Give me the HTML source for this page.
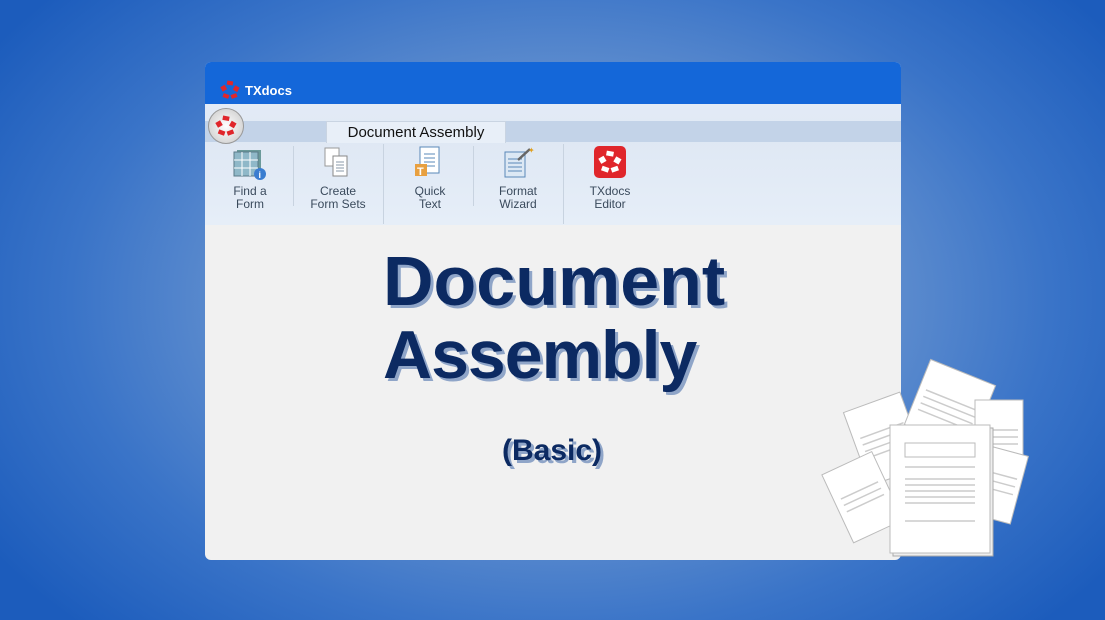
<!DOCTYPE html>
<html><head><style>
*{margin:0;padding:0;box-sizing:border-box}
body{width:1105px;height:620px;overflow:hidden;position:relative;font-family:"Liberation Sans",sans-serif;
background:radial-gradient(ellipse 680px 460px at 560px 300px,#8aabd8 0%,#6a95d0 40%,#3a74c8 72%,#1c5cbc 100%)}
.win{position:absolute;left:205px;top:62px;width:696px;height:498px;background:#f1f1f1;border-radius:6px;overflow:hidden}
.title{position:absolute;left:0;top:0;width:100%;height:42px;background:#1467d9}
.title span{position:absolute;left:40px;top:21px;color:#fff;font-weight:bold;font-size:13px}
.ribbon{position:absolute;top:42px;left:0;width:100%;height:121px;background:linear-gradient(#e3ebf6,#dfe8f4 30%,#e6eef8)}
.strip{position:absolute;top:17px;left:0;width:100%;height:21px;background:#c3d3e8}
.tab{position:absolute;left:121px;top:17px;width:180px;height:22px;background:#e8eff8;border:1px solid #c9d4e2;border-bottom:none;font-size:15px;text-align:center;line-height:22px;color:#111}
.btn{position:absolute;top:88px;font-size:12px;color:#3a4a5c;text-align:center;line-height:13px;width:80px}
.sep{position:absolute;top:84px;width:1px;height:80px;background:#c8d3e0}
h1{position:absolute;color:#0c2a62;font-weight:bold;text-shadow:3px 3px 0 #8fa5c8;white-space:nowrap}
.p line{stroke:#ccc;stroke-width:1.5}
</style></head><body>
<div class="win">
<div class="title">
<svg style="position:absolute;left:15px;top:18px" width="20" height="20" viewBox="0 0 20 20"><g fill="#e0262b"><rect x="7" y="1" width="6" height="4" transform="rotate(10 10 3)"/><rect x="14" y="6" width="5" height="5" transform="rotate(30 16 8)"/><rect x="11" y="14" width="6" height="4" transform="rotate(-20 14 16)"/><rect x="3" y="14" width="6" height="4" transform="rotate(20 6 16)"/><rect x="1" y="6" width="5" height="5" transform="rotate(-30 3 8)"/></g></svg>
<span>TXdocs</span></div>
<div class="ribbon"></div>
</div>
<div style="position:absolute;left:205px;top:104px;width:696px;height:121px">
<div class="strip"></div>
<div class="tab">Document Assembly</div>
<div style="position:absolute;left:3px;top:4px;width:36px;height:36px;border-radius:50%;background:radial-gradient(#fff,#d8d8d8 70%,#a8a8a8);border:1px solid #999"></div>
<svg style="position:absolute;left:10px;top:11px" width="22" height="22" viewBox="0 0 20 20"><g fill="#e0262b"><rect x="7" y="1" width="6" height="4" transform="rotate(10 10 3)"/><rect x="14" y="6" width="5" height="5" transform="rotate(30 16 8)"/><rect x="11" y="14" width="6" height="4" transform="rotate(-20 14 16)"/><rect x="3" y="14" width="6" height="4" transform="rotate(20 6 16)"/><rect x="1" y="6" width="5" height="5" transform="rotate(-30 3 8)"/></g></svg>
<svg style="position:absolute;left:28px;top:42px" width="36" height="36"><rect x="4" y="4" width="24" height="24" fill="#6b9a9a"/><rect x="1" y="6" width="24" height="24" fill="#8fb8c8" stroke="#5a7a88"/><g stroke="#fff"><line x1="1" y1="14" x2="25" y2="14"/><line x1="1" y1="22" x2="25" y2="22"/><line x1="9" y1="6" x2="9" y2="30"/><line x1="17" y1="6" x2="17" y2="30"/></g><circle cx="27" cy="28" r="6" fill="#3a7dd0"/><text x="25.5" y="32" fill="#fff" font-size="9" font-weight="bold">i</text></svg>
<svg style="position:absolute;left:118px;top:42px" width="30" height="34"><rect x="2" y="2" width="14" height="18" fill="#fff" stroke="#999"/><rect x="10" y="10" width="14" height="20" fill="#fff" stroke="#888"/><g stroke="#8899aa"><line x1="13" y1="16" x2="21" y2="16"/><line x1="13" y1="19" x2="21" y2="19"/><line x1="13" y1="22" x2="21" y2="22"/><line x1="13" y1="25" x2="21" y2="25"/></g></svg>
<svg style="position:absolute;left:209px;top:42px" width="30" height="34"><rect x="6" y="1" width="19" height="26" fill="#fff" stroke="#5a88b8"/><g stroke="#5a88b8"><line x1="10" y1="8" x2="21" y2="8"/><line x1="10" y1="12" x2="21" y2="12"/><line x1="10" y1="16" x2="21" y2="16"/><line x1="10" y1="20" x2="21" y2="20"/></g><rect x="1" y="18" width="12" height="12" fill="#e8a040"/><text x="3" y="29" fill="#fff" font-size="11" font-weight="bold">T</text></svg>
<svg style="position:absolute;left:297px;top:42px" width="34" height="34"><rect x="3" y="6" width="20" height="25" fill="#dce8f4" stroke="#5a88b8"/><g stroke="#5a88b8"><line x1="6" y1="13" x2="20" y2="13"/><line x1="6" y1="17" x2="20" y2="17"/><line x1="6" y1="21" x2="20" y2="21"/><line x1="6" y1="25" x2="20" y2="25"/></g><line x1="16" y1="14" x2="28" y2="3" stroke="#666" stroke-width="2.5"/><text x="26" y="7" fill="#e0a020" font-size="8">✦</text></svg>
<div style="position:absolute;left:389px;top:42px;width:32px;height:32px;border-radius:5px;background:#e0262b"></div>
<svg style="position:absolute;left:393px;top:46px" width="24" height="24" viewBox="0 0 20 20"><g fill="#fff"><rect x="7" y="1" width="6" height="4" transform="rotate(10 10 3)"/><rect x="14" y="6" width="5" height="5" transform="rotate(30 16 8)"/><rect x="11" y="14" width="6" height="4" transform="rotate(-20 14 16)"/><rect x="3" y="14" width="6" height="4" transform="rotate(20 6 16)"/><rect x="1" y="6" width="5" height="5" transform="rotate(-30 3 8)"/></g></svg>
<div class="btn" style="left:5px;top:81px">Find a<br>Form</div>
<div class="btn" style="left:93px;top:81px">Create<br>Form Sets</div>
<div class="btn" style="left:185px;top:81px">Quick<br>Text</div>
<div class="btn" style="left:273px;top:81px">Format<br>Wizard</div>
<div class="btn" style="left:365px;top:81px">TXdocs<br>Editor</div>
<div class="sep" style="left:88px;top:42px;height:60px"></div>
<div class="sep" style="left:178px;top:40px"></div>
<div class="sep" style="left:268px;top:42px;height:60px"></div>
<div class="sep" style="left:358px;top:40px"></div>
</div>
<h1 style="left:383px;top:241px;font-size:70px">Document</h1>
<h1 style="left:383px;top:316px;font-size:68px;letter-spacing:-1px">Assembly</h1>
<h1 style="left:502px;top:434px;font-size:30px">(Basic)</h1>
<svg class="p" style="position:absolute;left:820px;top:355px" width="220" height="210">
<g transform="rotate(-20 65 84)"><rect x="35" y="45" width="60" height="78" fill="#fff" stroke="#bbb"/><line x1="42" y1="75" x2="88" y2="75"/><line x1="42" y1="82" x2="88" y2="82"/><line x1="42" y1="89" x2="88" y2="89"/><line x1="42" y1="96" x2="88" y2="96"/></g>
<g transform="rotate(22 130 50)"><rect x="95" y="15" width="70" height="70" fill="#fff" stroke="#bbb"/><line x1="102" y1="45" x2="158" y2="45"/><line x1="102" y1="52" x2="158" y2="52"/><line x1="102" y1="59" x2="158" y2="59"/><line x1="102" y1="66" x2="158" y2="66"/></g>
<g><rect x="155" y="45" width="48" height="60" fill="#fff" stroke="#bbb"/><line x1="160" y1="75" x2="198" y2="75"/><line x1="160" y1="82" x2="198" y2="82"/><line x1="160" y1="89" x2="198" y2="89"/></g>
<g transform="rotate(15 180 130)"><rect x="160" y="95" width="40" height="70" fill="#fff" stroke="#bbb"/><line x1="165" y1="120" x2="195" y2="120"/><line x1="165" y1="128" x2="195" y2="128"/><line x1="165" y1="136" x2="195" y2="136"/></g>
<g transform="rotate(-25 42 142)"><rect x="15" y="105" width="55" height="75" fill="#fff" stroke="#bbb"/><line x1="22" y1="135" x2="63" y2="135"/><line x1="22" y1="142" x2="63" y2="142"/><line x1="22" y1="149" x2="63" y2="149"/></g>
<rect x="73" y="73" width="100" height="128" fill="#eee" stroke="#aaa"/>
<rect x="70" y="70" width="100" height="128" fill="#fff" stroke="#bbb"/>
<g style="stroke:#ccc;stroke-width:2"><line x1="85" y1="112" x2="155" y2="112"/><line x1="85" y1="124" x2="155" y2="124"/><line x1="85" y1="130" x2="155" y2="130"/><line x1="85" y1="136" x2="155" y2="136"/><line x1="85" y1="142" x2="155" y2="142"/><line x1="85" y1="148" x2="155" y2="148"/><line x1="85" y1="166" x2="155" y2="166"/></g>
<rect x="85" y="88" width="70" height="14" fill="none" stroke="#bbb"/>
</svg>
</body></html>
